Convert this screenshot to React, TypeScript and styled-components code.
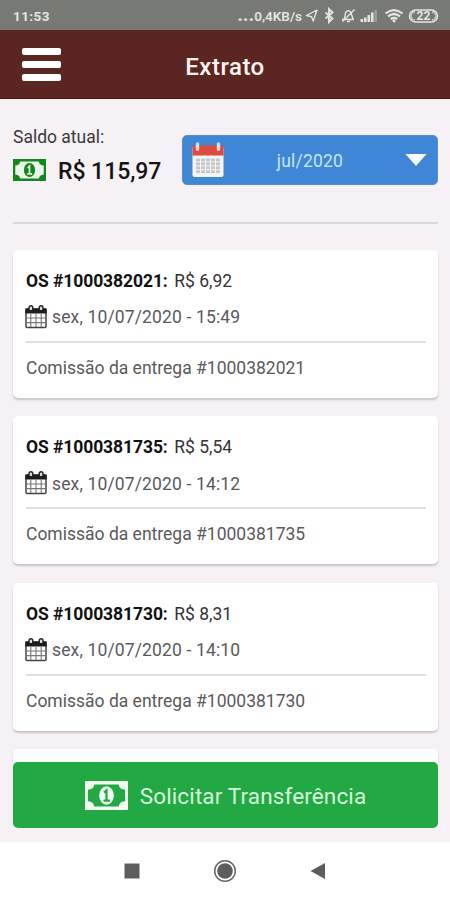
import React from "react";
import styled, { createGlobalStyle } from "styled-components";

const GlobalStyle = createGlobalStyle`
  * { box-sizing: border-box; }
  body { margin: 0; font-family: Roboto, sans-serif; }
`;

const Screen = styled.div`
  width: 450px;
  height: 900px;
  display: flex;
  flex-direction: column;
  overflow: hidden;
  background: #f5f1f5;
`;

const StatusBar = styled.div`
  height: 30px;
  flex: none;
  display: flex;
  align-items: center;
  justify-content: space-between;
  padding: 2px 11px 0 13px;
  background: #777975;
  color: #e4e5e2;
`;

const Clock = styled.span`
  font-size: 13.5px;
  font-weight: 700;
  letter-spacing: 0.4px;
`;

const StatusIcons = styled.div`
  display: flex;
  align-items: center;
  gap: 3px;
  height: 20px;
`;

const Speed = styled.span`
  display: flex;
  align-items: baseline;
  font-size: 13.5px;
  font-weight: 600;
  letter-spacing: 0;
`;

const Dots = styled.span`
  font-size: 17px;
  line-height: 14px;
  font-weight: 900;
  letter-spacing: 0.4px;
`;

const Header = styled.header`
  height: 69px;
  flex: none;
  display: grid;
  grid-template-columns: 62px 1fr 62px;
  align-items: center;
  background: #5b2522;
  border-bottom: 1px solid #4c0f12;
`;

const MenuButton = styled.div`
  display: flex;
  flex-direction: column;
  gap: 6px;
  padding: 1px 0 0 22px;
`;

const MenuBar = styled.span`
  width: 39px;
  height: 7px;
  border-radius: 2px;
  background: #fff;
`;

const Title = styled.h1`
  margin: 5px 0 0;
  text-align: center;
  font-size: 24px;
  font-weight: 500;
  line-height: 30px;
  letter-spacing: 0.5px;
  color: #fff4ee;
`;

const Summary = styled.section`
  height: 125px;
  flex: none;
  margin: 0 12px 0 13px;
  padding-top: 26px;
  display: flex;
  justify-content: space-between;
  border-bottom: 2px solid #d9d7da;
`;

const Balance = styled.div`
  flex: none;
`;

const BalanceLabel = styled.div`
  font-size: 17.5px;
  line-height: 24px;
  color: #3b3a3c;
`;

const BalanceRow = styled.div`
  display: flex;
  align-items: center;
  gap: 12px;
  height: 30px;
  margin-top: 6px;
`;

const Amount = styled.strong`
  padding-top: 3px;
  font-size: 23px;
  font-weight: 500;
  line-height: 30px;
  letter-spacing: -0.05px;
  white-space: nowrap;
  color: #141315;
`;

const MonthSelect = styled.div`
  width: 256px;
  height: 50px;
  margin-top: 10px;
  padding: 0 10px 0 9px;
  display: grid;
  grid-template-columns: 32px 1fr 22px;
  align-items: center;
  border-radius: 5px;
  background: #3f87d6;
  border: 1px solid #5a8ccb;
`;

const MonthText = styled.span`
  padding: 1px 9px 0 0;
  text-align: center;
  font-size: 17.5px;
  letter-spacing: 0.2px;
  line-height: 24px;
  color: #c9e6fb;
`;

const List = styled.main`
  flex: 1;
  min-height: 0;
  overflow: hidden;
  padding: 25.5px 12px 0 13px;
  display: flex;
  flex-direction: column;
  gap: 18.5px;
`;

const Card = styled.article`
  height: 148px;
  flex: none;
  padding: 19px 12px 0 13px;
  border-radius: 5px;
  background: #fff;
  box-shadow: 0 2px 2px rgba(70, 65, 72, 0.25);
`;

const OrderLine = styled.div`
  font-size: 17.5px;
  line-height: 24px;
  color: #343336;
  white-space: nowrap;
`;

const OrderNumber = styled.strong`
  font-weight: 700;
  color: #111;
  letter-spacing: -0.08px;
  margin-right: 6.5px;
`;

const DateLine = styled.div`
  display: flex;
  align-items: center;
  gap: 5px;
  height: 24px;
  margin: 12px 0 0 -1px;
  font-size: 17.5px;
  letter-spacing: 0.14px;
  color: #5a595c;
`;

const DateText = styled.span`
  padding-top: 1px;
`;

const Note = styled.div`
  margin-top: 12px;
  padding-top: 13px;
  border-top: 2px solid #e1e0e2;
  font-size: 17.5px;
  line-height: 24px;
  color: #5a595c;
`;

const Footer = styled.footer`
  height: 80px;
  flex: none;
  padding: 0 12px 14px 13px;
`;

const TransferButton = styled.button`
  width: 100%;
  height: 66px;
  display: flex;
  align-items: center;
  justify-content: center;
  gap: 12px;
  border: 0;
  padding: 0;
  border-radius: 5px;
  background: #22a943;
  color: #d8f9dc;
  font-family: inherit;
  font-size: 22.5px;
  letter-spacing: 0.13px;
`;

const TransferLabel = styled.span`
  padding-top: 2px;
`;

const NavBar = styled.nav`
  height: 58px;
  flex: none;
  display: flex;
  align-items: center;
  justify-content: center;
  gap: 73px;
  background: #fff;
`;

const Banknote = ({ w, h, color, paper }: { w: number; h: number; color: string; paper: string }) => (
  <svg width={w} height={h} viewBox="0 0 44 30" preserveAspectRatio="none">
    <rect width="44" height="30" fill={color} />
    <path d="M9.500 3.500H34.500Q35 8.500 41 9V21Q35 21.500 34.500 26.500H9.500Q9 21.500 3 21V9Q9 8.500 9.500 3.500Z" fill={paper} />
    <ellipse cx="22" cy="15" rx="7.500" ry="9.500" fill={color} />
    <path d="M19.500 12L22 9.800V20M19 20.200H25.500" fill="none" stroke={paper} strokeWidth="2.300" />
  </svg>
);

const CalendarDark = () => (
  <svg width="22" height="24" viewBox="0 0 22 24">
    <rect x="1" y="4" width="20" height="18.5" rx="1" fill="#fff" stroke="#444" strokeWidth="1.5" />
    <path d="M0.3 3.5H21.7V8.5H0.3Z" fill="#1d1d1d" />
    <path d="M5.8 8.5V22M11 8.5V22M16.2 8.5V22M1 13H21M1 17.6H21" stroke="#777" strokeWidth="1.1" />
    <rect x="4" y="0.8" width="3.8" height="5" rx="1.9" fill="#ddd" stroke="#222" strokeWidth="1.4" />
    <rect x="14.2" y="0.8" width="3.8" height="5" rx="1.9" fill="#ddd" stroke="#222" strokeWidth="1.4" />
  </svg>
);

const CalendarRed = () => (
  <svg width="32" height="36" viewBox="0 0 32 37" preserveAspectRatio="none">
    <rect x="0.5" y="4" width="31" height="32" rx="2" fill="#f5f5f4" />
    <path d="M0.5 14V5.5Q0.5 3.5 2.5 3.5H29.5Q31.5 3.5 31.5 5.5V14Z" fill="#df4b40" />
    <path d="M5.5 2V7.5M26.5 2V7.5" stroke="#d9dfe6" strokeWidth="3.4" strokeLinecap="round" />
    <g fill="#c6c8c9">
      {[0, 1, 2, 3].map((r) =>
        [0, 1, 2, 3, 4].map((c) => (
          <rect key={`${r}-${c}`} x={4 + c * 5} y={17 + r * 4} width="4" height="3" />
        ))
      )}
    </g>
  </svg>
);

const StatusGlyphs = () => (
  <svg width="134" height="20" viewBox="0 0 134 20" fill="none" stroke="#e4e5e2" strokeWidth="1.4">
    <path d="M1.5 9.5L12 4L8.2 15L6.5 10.8Z" strokeLinejoin="round" />
    <path d="M20.5 6.5L27.5 12.5L24 16V3L27.5 6.5L20.5 12.5" strokeWidth="1.9" />
    <path d="M37 13.5H49M39 13C40.5 11 39.5 7 41.5 5.5Q43 4 45 5.5C47.5 7.5 46 10.5 48.5 13.3M42 15.5H45M37.5 15.5L49.5 3.5" />
    <g stroke="none" fill="#e4e5e2">
      <rect x="55.5" y="13" width="2.6" height="3" />
      <rect x="59" y="11.5" width="2.6" height="4.5" />
      <rect x="62.5" y="9" width="2.6" height="7" />
      <rect x="66" y="6.5" width="2.6" height="9.5" />
      <rect x="69.5" y="4" width="2.4" height="12" opacity="0.35" />
    </g>
    <path d="M80.5 7.5Q89 0.8 97.5 7.5M83 10.4Q89 5.6 95 10.4M85.7 13Q89 10.6 92.2 13" strokeWidth="2.2" />
    <circle cx="89" cy="14.8" r="1.6" fill="#e4e5e2" stroke="none" />
    <rect x="104.5" y="4" width="28" height="12" rx="6" strokeWidth="1.5" />
    <path d="M110 6A4 4 0 0 0 110 14M127 6A4 4 0 0 1 127 14" strokeWidth="1.8" opacity="0.65" />
    <text x="118.5" y="14.3" textAnchor="middle" fontSize="12" fontWeight="700" fill="#e4e5e2" stroke="none">22</text>
  </svg>
);

const orders = [
  { id: "1000382021", value: "6,92", time: "15:49" },
  { id: "1000381735", value: "5,54", time: "14:12" },
  { id: "1000381730", value: "8,31", time: "14:10" },
];

export default function App() {
  return (
    <Screen>
      <GlobalStyle />
      <StatusBar>
        <Clock>11:53</Clock>
        <StatusIcons>
          <Speed><Dots>...</Dots>0,4KB/s</Speed>
          <StatusGlyphs />
        </StatusIcons>
      </StatusBar>
      <Header>
        <MenuButton>
          <MenuBar />
          <MenuBar />
          <MenuBar />
        </MenuButton>
        <Title>Extrato</Title>
      </Header>
      <Summary>
        <Balance>
          <BalanceLabel>Saldo atual:</BalanceLabel>
          <BalanceRow>
            <Banknote w={33} h={22} color="#14861f" paper="#e9f6e8" />
            <Amount>R$ 115,97</Amount>
          </BalanceRow>
        </Balance>
        <MonthSelect>
          <CalendarRed />
          <MonthText>jul/2020</MonthText>
          <svg width="22" height="12" viewBox="0 0 22 12"><path d="M0.5 0H21.5L11 12Z" fill="#fff" /></svg>
        </MonthSelect>
      </Summary>
      <List>
        {orders.map((o) => (
          <Card key={o.id}>
            <OrderLine><OrderNumber>OS #{o.id}:</OrderNumber>R$ {o.value}</OrderLine>
            <DateLine><CalendarDark /><DateText>sex, 10/07/2020 - {o.time}</DateText></DateLine>
            <Note>Comissão da entrega #{o.id}</Note>
          </Card>
        ))}
        <Card />
      </List>
      <Footer>
        <TransferButton>
          <Banknote w={43} h={29} color="#f1fbf1" paper="#22a943" />
          <TransferLabel>Solicitar Transferência</TransferLabel>
        </TransferButton>
      </Footer>
      <NavBar>
        <svg width="16" height="16"><rect x="0.5" y="0.5" width="15" height="15" fill="#5d5d5d" /></svg>
        <svg width="24" height="24">
          <circle cx="12" cy="12" r="10.3" fill="none" stroke="#666" strokeWidth="1.5" />
          <circle cx="12" cy="12" r="7.8" fill="#5d5d5d" />
        </svg>
        <svg width="16" height="18"><path d="M0.5 9L15 1V17Z" fill="#5d5d5d" /></svg>
      </NavBar>
    </Screen>
  );
}
